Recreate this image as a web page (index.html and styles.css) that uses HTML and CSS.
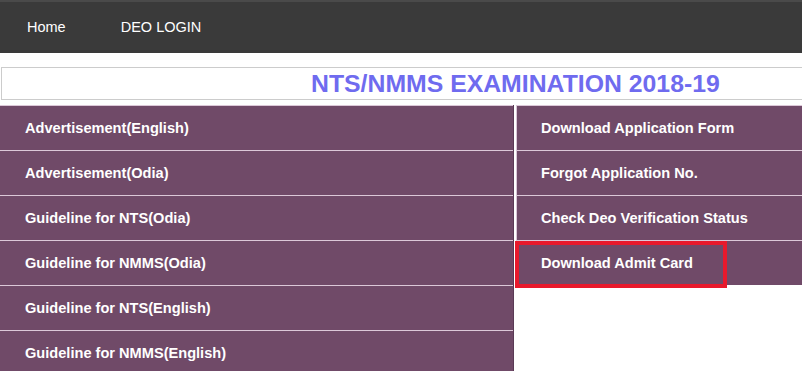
FILE: index.html
```html
<!DOCTYPE html>
<html>
<head>
<meta charset="utf-8">
<title>NTS/NMMS Examination 2018-19</title>
<link rel="stylesheet" href="styles.css">
</head>
<body>
<nav class="topnav">
  <a class="navlink" href="#">Home</a>
  <a class="navlink" href="#">DEO LOGIN</a>
</nav>
<div class="titlebox">
  <h1 class="title">NTS/NMMS EXAMINATION 2018-19</h1>
</div>
<div class="menus">
  <ul class="menu menu-left">
    <li class="item"><a href="#">Advertisement(English)</a></li>
    <li class="item"><a href="#">Advertisement(Odia)</a></li>
    <li class="item"><a href="#">Guideline for NTS(Odia)</a></li>
    <li class="item"><a href="#">Guideline for NMMS(Odia)</a></li>
    <li class="item"><a href="#">Guideline for NTS(English)</a></li>
    <li class="item"><a href="#">Guideline for NMMS(English)</a></li>
  </ul>
  <ul class="menu menu-right">
    <li class="item"><a href="#">Download Application Form</a></li>
    <li class="item"><a href="#">Forgot Application No.</a></li>
    <li class="item"><a href="#">Check Deo Verification Status</a></li>
    <li class="item highlighted"><a href="#">Download Admit Card</a><span class="mark"></span></li>
  </ul>
</div>
</body>
</html>
```
FILE: styles.css
```css
html, body {
  margin: 0;
  padding: 0;
  overflow: hidden;
  background: #ffffff;
  font-family: "Liberation Sans", Arial, sans-serif;
}
.topnav {
  display: flex;
  align-items: center;
  height: 51px;
  border-top: 2px solid #4a4a4a;
  background: #3a3a3a;
}
.navlink {
  color: #ffffff;
  text-decoration: none;
  font-size: 14.5px;
  padding: 0 27px;
  line-height: 51px;
}
.navlink + .navlink {
  padding-left: 28px;
}
.titlebox {
  margin: 14px 0 0 1px;
  height: 31px;
  border: 1px solid #cccccc;
  border-right: none;
  display: flex;
  align-items: center;
}
.title {
  margin: 0;
  padding-left: 309px;
  font-size: 24.8px;
  font-weight: bold;
  color: #6f6bef;
  line-height: 31px;
  white-space: nowrap;
}
.menus {
  display: grid;
  grid-template-columns: 514px 1fr;
  column-gap: 2px;
  margin-top: 5px;
}
.menu {
  list-style: none;
  margin: 0;
  padding: 0;
}
.menu-left {
  border-right: 1px solid #5a3a55;
}
.menu-right {
  border-left: 1px solid #d9c6d6;
  align-self: start;
}
.item {
  position: relative;
  height: 44px;
  border-top: 1px solid #dcc8d8;
  background: #704a68;
  display: flex;
  align-items: center;
}
.item a {
  color: #ffffff;
  text-decoration: none;
  font-weight: bold;
  font-size: 14.6px;
  padding-left: 25px;
}
.menu-right .item a {
  padding-left: 24px;
}
.mark {
  position: absolute;
  left: -2px;
  top: 0;
  width: 204px;
  height: 39px;
  border: 4px solid #e8192c;
}
```
